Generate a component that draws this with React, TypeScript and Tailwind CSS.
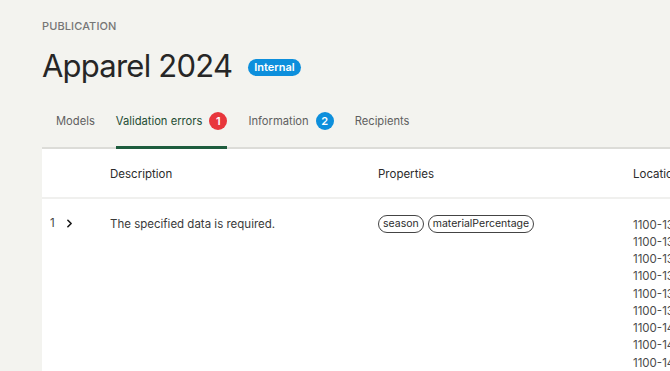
import { ChevronRight } from 'lucide-react';

const locations = [
  '1100-1301',
  '1100-1302',
  '1100-1303',
  '1100-1304',
  '1100-1305',
  '1100-1306',
  '1100-1401',
  '1100-1402',
  '1100-1403',
];

const tabs = [
  { label: 'Models' },
  { label: 'Validation errors', count: 1, badge: 'bg-[#e8363c]', active: true },
  { label: 'Information', count: 2, badge: 'bg-[#0d8fdc]' },
  { label: 'Recipients' },
];

export default function App() {
  return (
    <div className="h-[371px] w-[670px] overflow-hidden bg-[#f3f3ef] font-['Inter',sans-serif]">
      <div className="pl-[42px] pt-[18px]">
        <div className="text-[11px] font-medium uppercase tracking-[0.01em] text-[#767676]">Publication</div>

        <div className="mt-[11px] flex items-center">
          <h1 className="text-[31px] leading-[40px] tracking-[-0.025em] text-[#262626]">Apparel 2024</h1>
          <span className="ml-[16px] mt-[4px] rounded-full bg-[#0d8fdc] px-[6px] text-[11px] font-semibold leading-[17px] text-white">
            Internal
          </span>
        </div>

        <div className="mt-[19px] flex border-b-2 border-[#dcdcd8] pl-[14px]">
          {tabs.map((t) => (
            <div
              key={t.label}
              className={`-mb-[2px] mr-[21px] flex h-[44px] items-center gap-[7px] border-b-[3px] pb-[8px] text-[11.2px] ${
                t.active ? 'border-[#1d5c3d] text-[#1f4d34]' : 'border-transparent text-[#5f5f5f]'
              }`}
            >
              {t.label}
              {t.count && (
                <span
                  className={`flex h-[18px] w-[18px] items-center justify-center rounded-full text-[11px] font-semibold text-white ${t.badge}`}
                >
                  {t.count}
                </span>
              )}
            </div>
          ))}
        </div>

        <div className="bg-white text-[11.5px] text-[#2b2b2b]">
          <div className="grid h-[50px] grid-cols-[68px_268px_255px_1fr] items-center border-b-2 border-[#f0f0ee] pt-[5px]">
            <div />
            <div>Description</div>
            <div>Properties</div>
            <div className="whitespace-nowrap">Locations</div>
          </div>
          <div className="grid grid-cols-[68px_268px_255px_1fr] pt-[16px]">
            <div className="flex h-[18px] items-center gap-[8px] pl-[8px] text-[#444]">
              1
              <ChevronRight size={13} strokeWidth={3} className="text-[#1a1a1a]" />
            </div>
            <div className="leading-[18px] text-[#3a3a3a]">The specified data is required.</div>
            <div className="flex gap-[4px]">
              <span className="h-[18px] rounded-full border border-[#444] px-[4px] text-[10.5px] leading-[16px]">season</span>
              <span className="h-[18px] rounded-full border border-[#444] px-[4px] text-[10.5px] leading-[16px]">
                materialPercentage
              </span>
            </div>
            <div className="pt-[2px] text-[#4a4a4a]">
              {locations.map((l) => (
                <div key={l} className="whitespace-nowrap leading-[17.25px]">
                  {l}
                </div>
              ))}
            </div>
          </div>
        </div>
      </div>
    </div>
  );
}
